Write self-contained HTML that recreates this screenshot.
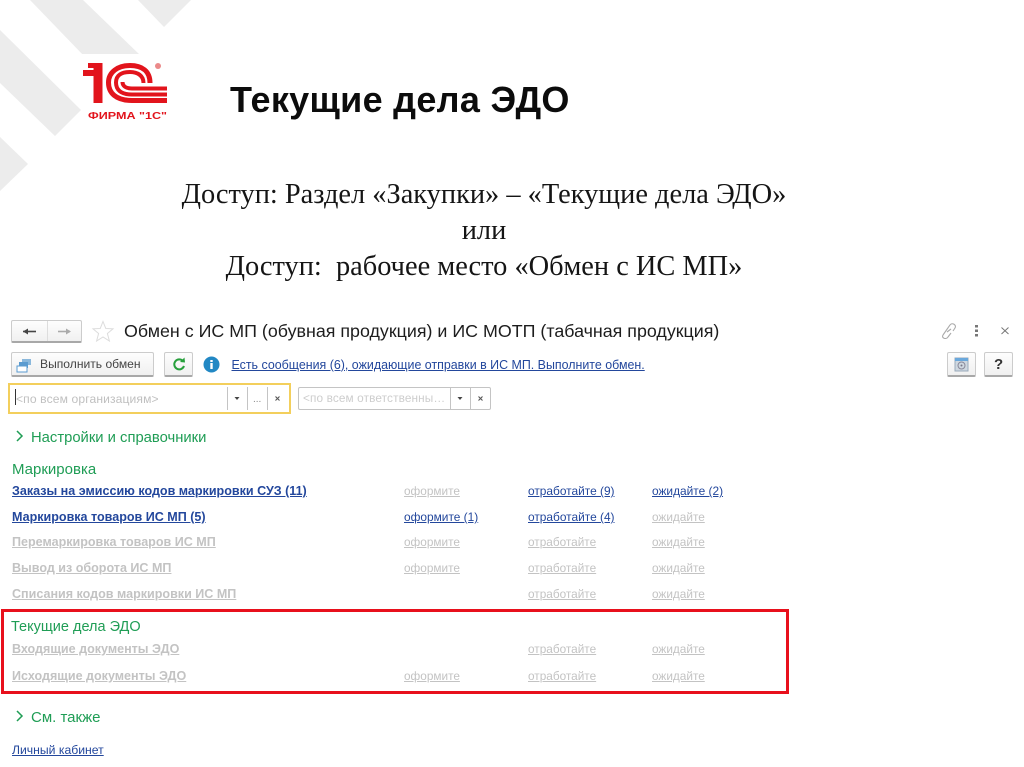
<!DOCTYPE html>
<html><head><meta charset="utf-8">
<style>
html,body{margin:0;padding:0;background:#fff}
#p{position:relative;width:1024px;height:767px;overflow:hidden;background:#fff;font-family:"Liberation Sans",sans-serif;filter:blur(.3px)}
.t{position:absolute;white-space:nowrap;line-height:1}
.s{font-family:"Liberation Serif",serif;font-size:28.4px;color:#151515;left:0;width:968px;text-align:center;line-height:1}
.g{color:#c3c3c3;text-decoration:underline;font-size:11.8px}
.b{color:#23479c;text-decoration:underline;font-size:11.9px}
.gb{color:#c3c3c3;text-decoration:underline;font-size:12.55px;font-weight:bold}
.bb{color:#23479c;text-decoration:underline;font-size:12.55px;font-weight:bold}
.h{color:#1f9d55;font-size:14.8px}
.btn{position:absolute;box-sizing:border-box;background:linear-gradient(#fdfdfd,#f0f0f0);border:1px solid #ccc;border-bottom:2px solid #a8a8a8;border-radius:2px}
</style></head><body><div id="p">
<svg style="position:absolute;left:0;top:0" width="240" height="200">
<polygon points="30,0 83,0 140,55 112,85" fill="#ececec"/>
<polygon points="0,30 81,110 55,136 0,83" fill="#ececec"/>
<polygon points="138,0 191,0 164,27" fill="#ececec"/>
<polygon points="0,137 28,164 0,191" fill="#ececec"/>
<rect x="82" y="54" width="92" height="72" fill="#fff"/>
<g fill="none" stroke="#e2141c">
<path d="M83 73H96" stroke-width="6"/>
<path d="M88 65.500H100" stroke-width="5"/>
<path d="M98 63V103" stroke-width="9"/>
<path d="M167 100.500H132C116 100.500 108.500 93 108.500 82.500C108.500 72 118 65.500 130 65.500C142 65.500 150 71 150 83" stroke-width="5"/>
<path d="M167 94.500H132C121 94.500 116 90 116 82.500C116 75 122 72 130 72C138 72 143.500 76 143.500 83" stroke-width="4"/>
<path d="M167 88.500H132C126 88.500 122.500 86 122.500 82" stroke-width="4"/>
</g>
<circle cx="158" cy="66" r="3" fill="#eb8a8a"/>
<text x="88" y="119" font-family="Liberation Sans" font-weight="bold" font-size="10.5" fill="#e2141c" textLength="79" lengthAdjust="spacingAndGlyphs">ФИРМА "1С"</text>
</svg>
<div class="t" style="left:230px;top:82px;font-size:36px;font-weight:bold;color:#0c0c0c;letter-spacing:.3px">Текущие дела ЭДО</div>
<div class="t s" style="top:181px">Доступ: Раздел «Закупки» – «Текущие дела ЭДО»</div>
<div class="t s" style="top:217px">или</div>
<div class="t s" style="top:253px">Доступ:&nbsp; рабочее место «Обмен с ИС МП»</div>

<div class="btn" style="left:11px;top:320px;width:71px;height:23px"></div>
<div style="position:absolute;left:47px;top:321px;width:1px;height:20px;background:#ddd"></div>
<svg style="position:absolute;left:11px;top:320px" width="104" height="24">
<path d="M12 11.500H25" stroke="#444" stroke-width="1.600"/><polygon points="12,11.500 17,8.500 17,14.500" fill="#444"/>
<path d="M47 11.500H59" stroke="#aaa" stroke-width="1.600"/><polygon points="60,11.500 55,8.500 55,14.500" fill="#aaa"/>
<polygon points="92,1.500 94.800,8.500 102,8.800 96.400,13.500 98.400,21 92,17 85.600,21 87.600,13.500 82,8.800 89.200,8.500" fill="none" stroke="#dcdcdc"/>
</svg>
<div class="t" style="left:124px;top:323px;font-size:17.85px;color:#1d1d1d">Обмен с ИС МП (обувная продукция) и ИС МОТП (табачная продукция)</div>
<svg style="position:absolute;left:938px;top:320px" width="75" height="24">
<path d="M5 15L12 5C14 2 19 5 17 8L15 11M13 13L10 17C8 20 3 18 5 15M9 12L13 9" fill="none" stroke="#aaa" stroke-width="1.100"/>
<rect x="37" y="5" width="3" height="2.500" fill="#777"/><rect x="37" y="9.500" width="3" height="2.500" fill="#777"/><rect x="37" y="14" width="3" height="2.500" fill="#777"/>
<path d="M63.500 7.500L70.500 14M70.500 7.500L63.500 14" stroke="#777" stroke-width="1"/>
</svg>

<div class="btn" style="left:11px;top:352px;width:143px;height:25px"></div>
<svg style="position:absolute;left:16px;top:357px" width="16" height="16">
<rect x="6" y="2" width="9" height="6" fill="#8ab8dc"/><rect x="3" y="5" width="9" height="6" fill="#5a9bd0"/><rect x="1" y="9" width="10" height="6" fill="#fff" stroke="#5a9bd0"/>
</svg>
<div class="t" style="left:40px;top:358px;font-size:12.1px;color:#444">Выполнить обмен</div>
<div class="btn" style="left:164px;top:352px;width:29px;height:25px"></div>
<svg style="position:absolute;left:171px;top:357px" width="16" height="15">
<path d="M12 4A5 5 0 1 0 13 9" fill="none" stroke="#27a03c" stroke-width="2"/><polygon points="9,5 14,5.500 13.500,0.500" fill="#27a03c"/>
</svg>
<svg style="position:absolute;left:203px;top:356px" width="17" height="17">
<circle cx="8.500" cy="8.500" r="8" fill="#2288c4"/><rect x="7.300" y="7" width="2.400" height="6" fill="#fff"/><rect x="7.300" y="4" width="2.400" height="2" fill="#fff"/>
</svg>
<div class="t" style="left:231.500px;top:359px;font-size:12.43px;color:#23479c;text-decoration:underline">Есть сообщения (6), ожидающие отправки в ИС МП. Выполните обмен.</div>
<div class="btn" style="left:947px;top:352px;width:29px;height:25px"></div>
<svg style="position:absolute;left:954px;top:357px" width="15" height="15">
<rect x="1" y="1" width="13" height="13" fill="#cfd8e0" stroke="#9ab"/><rect x="1" y="1" width="13" height="3" fill="#6aa8dc"/><circle cx="7.500" cy="8.500" r="3.500" fill="none" stroke="#889"/><circle cx="7.500" cy="8.500" r="1" fill="#778"/>
</svg>
<div class="btn" style="left:984px;top:352px;width:29px;height:25px"></div>
<div class="t" style="left:994px;top:357px;font-size:15px;font-weight:bold;color:#333">?</div>

<div style="position:absolute;left:8px;top:383px;width:283px;height:31px;box-sizing:border-box;border:2px solid #f3cf5c;background:#fff"></div>
<div style="position:absolute;left:15px;top:389px;width:1px;height:16px;background:#333"></div>
<div class="t" style="left:16px;top:393px;font-size:12.1px;color:#c0c0c0;letter-spacing:.12px">&lt;по всем организациям&gt;</div>
<div style="position:absolute;left:227px;top:387px;width:1px;height:23px;background:#c4c4c4"></div>
<div style="position:absolute;left:247px;top:387px;width:1px;height:23px;background:#c4c4c4"></div>
<div style="position:absolute;left:267px;top:387px;width:1px;height:23px;background:#c4c4c4"></div>
<svg style="position:absolute;left:234px;top:397px" width="8" height="5"><polygon points="0.500,0 5.500,0 3,3" fill="#444"/></svg>
<div class="t" style="left:253px;top:395px;font-size:10px;color:#888">...</div>
<svg style="position:absolute;left:274px;top:395px" width="8" height="8"><path d="M1.500 1.500L5.500 5.500M5.500 1.500L1.500 5.500" stroke="#555" stroke-width="1.100"/></svg>

<div style="position:absolute;left:298px;top:387px;width:193px;height:23px;box-sizing:border-box;border:1px solid #c4c4c4;border-radius:2px;background:#fff"></div>
<div class="t" style="left:303px;top:393px;font-size:11.8px;color:#cdcdcd;letter-spacing:.12px">&lt;по всем ответственны…</div>
<div style="position:absolute;left:450px;top:387px;width:1px;height:23px;background:#c4c4c4"></div>
<div style="position:absolute;left:470px;top:387px;width:1px;height:23px;background:#c4c4c4"></div>
<svg style="position:absolute;left:457px;top:397px" width="8" height="5"><polygon points="0.500,0 5.500,0 3,3" fill="#444"/></svg>
<svg style="position:absolute;left:477px;top:395px" width="8" height="8"><path d="M1.500 1.500L5.500 5.500M5.500 1.500L1.500 5.500" stroke="#555" stroke-width="1.100"/></svg>

<svg style="position:absolute;left:15px;top:430px" width="10" height="12"><path d="M2 1L7 6L2 11" fill="none" stroke="#1f9d55" stroke-width="1.500"/></svg>
<div class="t h" style="left:31px;top:431px">Настройки и справочники</div>
<div class="t h" style="left:12px;top:462px;font-size:15px">Маркировка</div>

<div class="t bb" style="left:12px;top:485px">Заказы на эмиссию кодов маркировки СУЗ (11)</div>
<div class="t bb" style="left:12px;top:511px">Маркировка товаров ИС МП (5)</div>
<div class="t gb" style="left:12px;top:536px">Перемаркировка товаров ИС МП</div>
<div class="t gb" style="left:12px;top:562px">Вывод из оборота ИС МП</div>
<div class="t gb" style="left:12px;top:588px">Списания кодов маркировки ИС МП</div>
<div class="t gb" style="left:12px;top:643px">Входящие документы ЭДО</div>
<div class="t gb" style="left:12px;top:670px">Исходящие документы ЭДО</div>

<div class="t g" style="left:404px;top:486px">оформите</div>
<div class="t b" style="left:404px;top:512px">оформите (1)</div>
<div class="t g" style="left:404px;top:537px">оформите</div>
<div class="t g" style="left:404px;top:563px">оформите</div>
<div class="t g" style="left:404px;top:671px">оформите</div>

<div class="t b" style="left:528px;top:486px">отработайте (9)</div>
<div class="t b" style="left:528px;top:512px">отработайте (4)</div>
<div class="t g" style="left:528px;top:537px">отработайте</div>
<div class="t g" style="left:528px;top:563px">отработайте</div>
<div class="t g" style="left:528px;top:589px">отработайте</div>
<div class="t g" style="left:528px;top:644px">отработайте</div>
<div class="t g" style="left:528px;top:671px">отработайте</div>

<div class="t b" style="left:652px;top:486px">ожидайте (2)</div>
<div class="t g" style="left:652px;top:512px">ожидайте</div>
<div class="t g" style="left:652px;top:537px">ожидайте</div>
<div class="t g" style="left:652px;top:563px">ожидайте</div>
<div class="t g" style="left:652px;top:589px">ожидайте</div>
<div class="t g" style="left:652px;top:644px">ожидайте</div>
<div class="t g" style="left:652px;top:671px">ожидайте</div>

<div style="position:absolute;left:1px;top:609px;width:788px;height:85px;box-sizing:border-box;border:3px solid #e8101c"></div>
<div class="t h" style="left:11px;top:620px;font-size:14.5px">Текущие дела ЭДО</div>

<svg style="position:absolute;left:15px;top:710px" width="10" height="12"><path d="M2 1L7 6L2 11" fill="none" stroke="#1f9d55" stroke-width="1.500"/></svg>
<div class="t h" style="left:31px;top:710px;font-size:15px">См. также</div>
<div class="t b" style="left:12px;top:744px;font-size:12.2px">Личный кабинет</div>
</div></body></html>
